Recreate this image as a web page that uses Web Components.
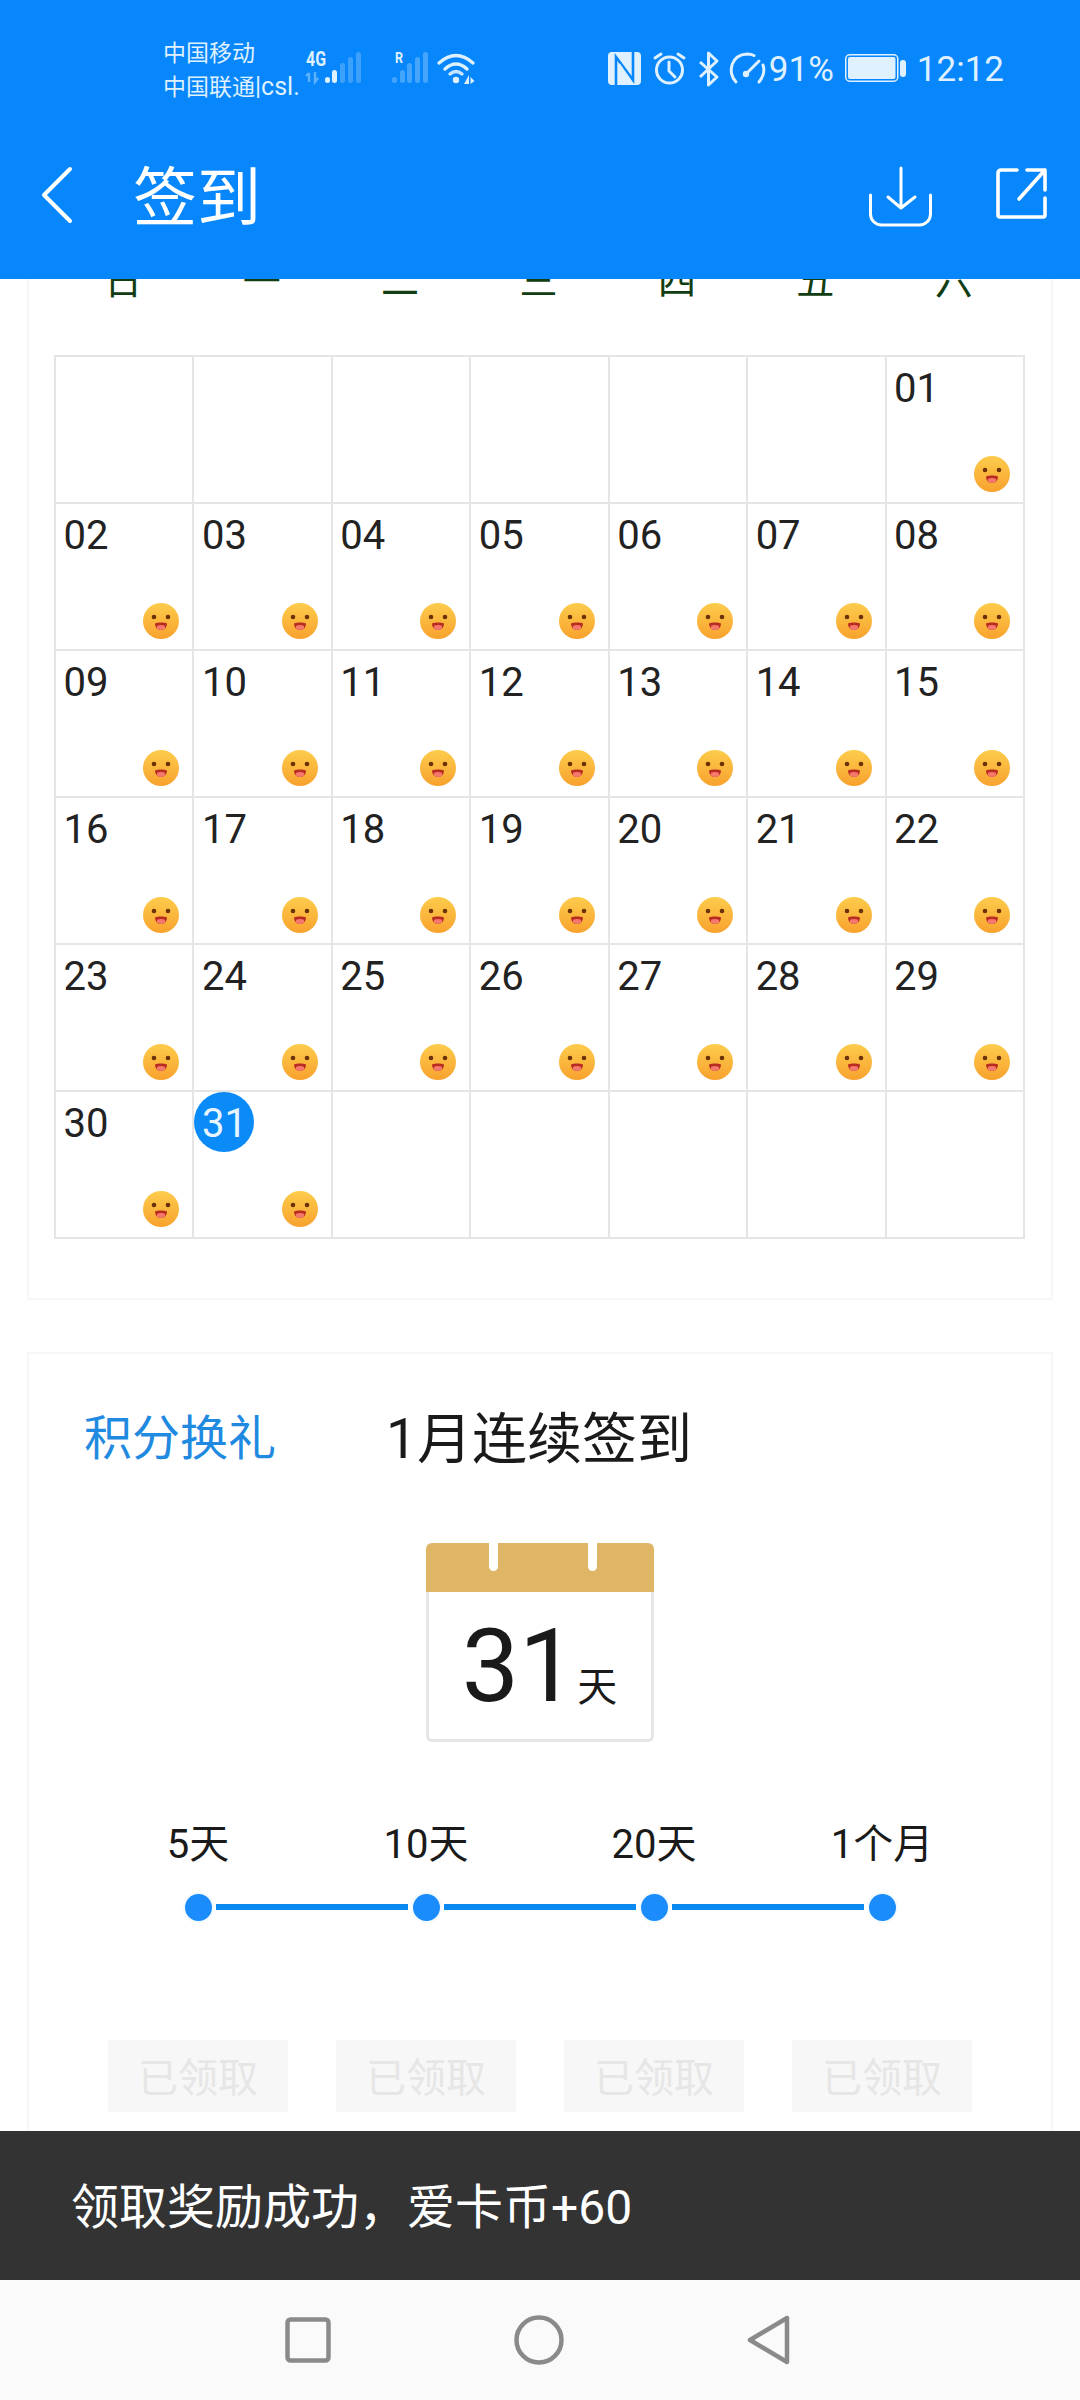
<!DOCTYPE html>
<html lang="zh">
<head>
<meta charset="utf-8">
<title>签到</title>
<style>
html, body { margin: 0; padding: 0; background: #fff; }
body { font-family: Roboto, "Noto Sans CJK SC", sans-serif; }
</style>
</head>
<body>
<app-shell>
  <status-bar slot="top"></status-bar>
  <title-bar slot="top">签到</title-bar>
  <calendar-card></calendar-card>
  <reward-card></reward-card>
  <toast-bar slot="bottom">领取奖励成功，爱卡币+60</toast-bar>
  <nav-bar slot="bottom"></nav-bar>
</app-shell>

<script>
class AppShell extends HTMLElement {
    constructor() {
        super();
        this.attachShadow({ mode: 'open' })
    }
    connectedCallback() {
        this.shadowRoot.innerHTML = `
        <style>
            :host { display: flex; flex-direction: column; width: 1080px; height: 2400px; overflow: hidden; background: #fff; }
            main { flex: 1; min-height: 0; overflow: hidden; display: flex; flex-direction: column; gap: 52px; }
        </style>
        <slot name="top"></slot>
        <main><slot></slot></main>
        <slot name="bottom"></slot>
        `
    }
}

class StatusBar extends HTMLElement {
    constructor() {
        super();
        this.attachShadow({ mode: 'open' })
    }
    connectedCallback() {
        const ink = '#dff0ff';
        this.shadowRoot.innerHTML = `
        <style>
            :host { display: flex; align-items: flex-start; height: 100px; box-sizing: border-box; padding: 0 76px 0 163px; background: #0787fb; color: ${ink}; }
            svg { display: block; flex: none; margin-top: 52px; overflow: visible; }
            .carrier { width: 143px; flex: none; margin-top: 37px; font-size: 23px; line-height: 33px; white-space: nowrap; }
            .carrier span { font-size: 25px; }
            .right { margin-left: auto; display: flex; align-items: flex-start; }
            .txt { font-size: 35px; line-height: 40px; margin-top: 50px; white-space: nowrap; }
        </style>
        <div class="carrier">中国移动<br>中国联通<span>|csl.</span></div>
        <svg width="56" height="33" viewBox="0 0 56 33">
            <text x="0" y="14" font-family="Roboto" font-weight="700" font-size="20" textLength="20" lengthAdjust="spacingAndGlyphs" fill="${ink}">4G</text>
            <g fill="#fff" fill-opacity=".22"><rect x="34" y="11" width="5" height="20" rx="2.5"/><rect x="42" y="5" width="5" height="26" rx="2.5"/><rect x="50" y="0" width="5" height="31" rx="2.5"/></g>
            <g fill="${ink}"><rect x="19" y="25" width="5" height="6" rx="2.5"/><rect x="26" y="18" width="5" height="13" rx="2.5"/></g>
            <path d="M3 21v9M0 24l3-3M9 20v10l3-4" stroke="#fff" stroke-opacity=".35" stroke-width="2.4" fill="none"/>
        </svg>
        <svg style="margin-left:30px" width="36" height="33" viewBox="0 0 36 33">
            <text x="3" y="11" font-family="Roboto" font-weight="700" font-size="15" textLength="8" lengthAdjust="spacingAndGlyphs" fill="${ink}">R</text>
            <g fill="#fff" fill-opacity=".25"><rect x="0" y="25" width="5" height="6" rx="2.5"/><rect x="8" y="18" width="5" height="13" rx="2.5"/><rect x="15" y="11" width="5" height="20" rx="2.5"/><rect x="23" y="5" width="5" height="26" rx="2.5"/><rect x="31" y="0" width="5" height="31" rx="2.5"/></g>
        </svg>
        <svg style="margin-left:9px" width="38" height="32" viewBox="0 0 38 32">
            <g fill="none" stroke="${ink}" stroke-width="3.4" stroke-linecap="round"><path d="M2 11Q19-4 36 11"/><path d="M8 17Q19 7 30 17"/><path d="M13 22Q19 17 25 22" opacity=".9"/></g>
            <circle cx="19" cy="28" r="3.2" fill="${ink}"/>
            <path d="M32 23v9h-5zM33.500 25l4 4-4 3z" fill="${ink}"/>
        </svg>
        <div class="right">
            <svg width="33" height="33" viewBox="0 0 33 33">
                <rect width="33" height="33" rx="4" fill="${ink}"/>
                <path d="M8 33V5l17 23V0" fill="none" stroke="#0787fb" stroke-width="2.600"/>
                <path d="M11 12l11 16" stroke="${ink}" stroke-width="2"/>
            </svg>
            <svg style="margin-left:12px" width="33" height="33" viewBox="0 0 33 33">
                <g fill="none" stroke="${ink}" stroke-width="3" stroke-linecap="round">
                    <circle cx="16.500" cy="18" r="13"/><path d="M16 10v9l6 6"/><path d="M2 6l6-4M31 6l-6-4"/>
                </g>
            </svg>
            <svg style="margin-left:12px" width="22" height="34" viewBox="0 0 22 34">
                <path d="M2 10l17 15-8.500 8V1L19 9 2 25" fill="none" stroke="${ink}" stroke-width="3" stroke-linejoin="round"/>
            </svg>
            <svg style="margin-left:9px" width="37" height="32" viewBox="0 0 37 32">
                <g fill="none" stroke="${ink}" stroke-width="3" stroke-linecap="round">
                    <path d="M7 30C-2 20 2 3 18 2c3 0 5 .5 7 1.500"/><path d="M34 13c2 6 1 11-4 17"/><path d="M17 22L30 9"/>
                </g>
                <circle cx="17" cy="22" r="3.200" fill="${ink}"/>
            </svg>
            <div class="txt" style="margin-left:3px;width:67px">91%</div>
            <svg style="margin-left:9px;margin-top:54px" width="61" height="28" viewBox="0 0 61 28">
                <rect x=".75" y=".75" width="52" height="26.500" rx="4" fill="none" stroke="${ink}" stroke-width="1.500"/>
                <rect x="3" y="3" width="47.500" height="22" rx="2" fill="${ink}"/>
                <rect x="55" y="6" width="6" height="17" rx="3" fill="${ink}"/>
            </svg>
            <div class="txt" style="margin-left:11px">12:12</div>
        </div>
        `
    }
}

class TitleBar extends HTMLElement {
    constructor() {
        super();
        this.attachShadow({ mode: 'open' })
    }
    connectedCallback() {
        this.shadowRoot.innerHTML = `
        <style>
            :host { display: flex; align-items: flex-start; height: 179px; box-sizing: border-box; padding: 67px 33px 0 41px; background: #0787fb; color: #fff; }
            svg { display: block; flex: none; overflow: visible; }
            .title { margin: 1px 0 0 60px; font-size: 64px; line-height: 62px; font-weight: 400; white-space: nowrap; }
            .actions { margin-left: auto; display: flex; align-items: flex-start; gap: 64px; }
        </style>
        <svg width="32" height="56" viewBox="0 0 32 56">
            <path d="M29 2L3 28l26 26" fill="none" stroke="#fff" stroke-width="4" stroke-linecap="round" stroke-linejoin="round"/>
        </svg>
        <div class="title"><slot></slot></div>
        <div class="actions">
            <svg width="63" height="60" viewBox="0 0 63 60">
                <g fill="none" stroke="#fff" stroke-width="3" stroke-linecap="round" stroke-linejoin="round">
                    <path d="M32 1v40M19 30l13 11 14-11"/>
                    <path d="M1.500 28v19a11 11 0 0 0 11 11h38a11 11 0 0 0 11-11V28"/>
                </g>
            </svg>
            <svg width="51" height="52" viewBox="0 0 51 52">
                <g fill="none" stroke="#fff" stroke-width="3.600" stroke-linecap="round" stroke-linejoin="round">
                    <path d="M21 3H5a3 3 0 0 0-3 3v42a2 2 0 0 0 2 2h43a2 2 0 0 0 2-2V31"/>
                    <path d="M23 32L49 3M31 3h18v20"/>
                </g>
            </svg>
        </div>
        `
    }
}

class DayCell extends HTMLElement {
    constructor() {
        super();
        this.attachShadow({ mode: 'open' })
    }
    connectedCallback() {
        const day = this.getAttribute('day');
        const today = this.hasAttribute('today');
        this.shadowRoot.innerHTML = `
        <style>
            :host { display: flex; flex-direction: column; justify-content: space-between; box-sizing: border-box; border-right: 2px solid #e5e5e5; border-bottom: 2px solid #e5e5e5; padding: 0 0 10px 0; min-width: 0; color: #222; }
            .num { width: 60px; height: 60px; box-sizing: border-box; padding-top: 3px; display: flex; align-items: center; justify-content: center; font-size: 40px; border-radius: 50%; }
            .num.today { padding-top: 2px; background: #0b8bf8; color: #e8f5ff; }
            svg { display: block; align-self: flex-end; margin-right: 13px; }
        </style>
        ${day ? `<div class="num ${today ? 'today' : ''}">${day}</div>
        <svg width="36" height="36" viewBox="0 0 36 36">
            <defs><linearGradient id="g" x1="0" y1="0" x2="0" y2="1"><stop offset="0" stop-color="#fdcc4c"/><stop offset="1" stop-color="#f8a22e"/></linearGradient></defs>
            <circle cx="18" cy="18" r="18" fill="url(#g)"/>
            <circle cx="11" cy="14" r="2.300" fill="#6b3208"/><circle cx="25" cy="14" r="2.300" fill="#6b3208"/>
            <path d="M12 20.500c3-1.300 9-1.300 12 0c0 3.800-2.500 6.500-6 6.500s-6-2.700-6-6.500z" fill="#b92c22"/>
            <ellipse cx="18" cy="24.500" rx="4.200" ry="2.400" fill="#f4796c"/>
        </svg>` : ''}
        `
    }
}

class CalendarCard extends HTMLElement {
    constructor() {
        super();
        this.attachShadow({ mode: 'open' })
    }
    connectedCallback() {
        const names = ['日', '一', '二', '三', '四', '五', '六'];
        let cells = '<day-cell></day-cell>'.repeat(6);
        for (let d = 1; d <= 31; d++) {
            const label = String(d).padStart(2, '0');
            cells += `<day-cell day="${label}" ${d === 31 ? 'today' : ''}></day-cell>`;
        }
        cells += '<day-cell></day-cell>'.repeat(5);
        this.shadowRoot.innerHTML = `
        <style>
            :host { display: block; flex: none; box-sizing: border-box; margin: -30px 27px 0; padding: 0 26px 59px 25px; border: 2px solid #f7f7f7; background: #fff; }
            .week { display: grid; grid-template-columns: repeat(7, 138.43px); height: 60px; margin: 0 0 44px 0; color: #123d12; font-size: 38px; line-height: 60px; text-align: center; }
            .grid { display: grid; grid-template-columns: repeat(7, 138.43px); grid-auto-rows: 147px; border-top: 2px solid #e5e5e5; border-left: 2px solid #e5e5e5; }
        </style>
        <div class="week">${names.map(n => `<span>${n}</span>`).join('')}</div>
        <div class="grid">${cells}</div>
        `
    }
}

class StreakCalendar extends HTMLElement {
    constructor() {
        super();
        this.attachShadow({ mode: 'open' })
    }
    connectedCallback() {
        this.shadowRoot.innerHTML = `
        <style>
            :host { display: block; width: 228px; height: 199px; box-sizing: border-box; }
            .top { position: relative; height: 49px; background: #dfb665; border-radius: 6px 6px 0 0; }
            .top i { position: absolute; top: 0; width: 9px; height: 28px; background: #fff; border-radius: 0 0 5px 5px; }
            .body { display: flex; align-items: baseline; justify-content: center; height: 150px; box-sizing: border-box; border: 3px solid #e6e6e6; border-top: 0; border-radius: 0 0 6px 6px; color: #1a1a1a; line-height: 148px; padding-right: 1px; }
            .n { font-size: 102px; }
            .u { font-size: 40px; margin-left: 1px; }
        </style>
        <div class="top"><i style="left:63px"></i><i style="left:162px"></i></div>
        <div class="body"><span class="n"><slot></slot></span><span class="u">天</span></div>
        `
    }
}

class ProgressStep extends HTMLElement {
    constructor() {
        super();
        this.attachShadow({ mode: 'open' })
    }
    connectedCallback() {
        const first = this.hasAttribute('first');
        const last = this.hasAttribute('last');
        this.shadowRoot.innerHTML = `
        <style>
            :host { display: flex; flex-direction: column; align-items: center; color: #1a1a1a; }
            .label { font-size: 40px; line-height: 50px; white-space: nowrap; }
            .track { display: flex; align-items: center; align-self: stretch; height: 28px; margin-top: 23px; }
            .seg { flex: 1; height: 6px; background: #0a8af0; }
            .seg.off { background: transparent; }
            .dot { width: 27px; height: 27px; margin: 0 4.500px; border-radius: 50%; background: #1a8cfb; box-shadow: 0 0 0 2px #f3faff; }
            .btn { width: 180px; height: 72px; margin-top: 119px; background: #f7f7f7; color: #e6e6e6; font-size: 40px; line-height: 78px; text-align: center; overflow: hidden; }
        </style>
        <div class="label"><slot></slot></div>
        <div class="track"><div class="seg ${first ? 'off' : ''}"></div><div class="dot"></div><div class="seg ${last ? 'off' : ''}"></div></div>
        <div class="btn">已领取</div>
        `
    }
}

class RewardCard extends HTMLElement {
    constructor() {
        super();
        this.attachShadow({ mode: 'open' })
    }
    connectedCallback() {
        this.shadowRoot.innerHTML = `
        <style>
            :host { display: block; flex: none; box-sizing: border-box; height: 860px; margin: 0 27px; padding: 49px 55px 0; border: 2px solid #f7f7f7; background: #fff; }
            .head { display: flex; align-items: center; height: 62px; white-space: nowrap; }
            .link { width: 302px; flex: none; color: #1f8adf; font-size: 48px; }
            .title { color: #1a1a1a; font-size: 55px; }
            .icon { display: flex; justify-content: center; margin-top: 78px; }
            .steps { display: grid; grid-template-columns: repeat(4, 228px); margin-top: 78px; }
        </style>
        <div class="head"><span class="link">积分换礼</span><span class="title">1月连续签到</span></div>
        <div class="icon"><streak-calendar>31</streak-calendar></div>
        <div class="steps">
            <progress-step first>5天</progress-step>
            <progress-step>10天</progress-step>
            <progress-step>20天</progress-step>
            <progress-step last>1个月</progress-step>
        </div>
        `
    }
}

class ToastBar extends HTMLElement {
    constructor() {
        super();
        this.attachShadow({ mode: 'open' })
    }
    connectedCallback() {
        this.shadowRoot.innerHTML = `
        <style>
            :host { display: flex; align-items: center; height: 149px; box-sizing: border-box; padding: 0 0 5px 71px; background: #333; color: #fff; font-size: 48px; white-space: nowrap; }
        </style>
        <slot></slot>
        `
    }
}

class NavBar extends HTMLElement {
    constructor() {
        super();
        this.attachShadow({ mode: 'open' })
    }
    connectedCallback() {
        this.shadowRoot.innerHTML = `
        <style>
            :host { display: flex; align-items: center; justify-content: center; gap: 183px; height: 120px; background: #fafafa; padding-right: 6px; }
            svg { display: block; flex: none; }
            g { fill: none; stroke: #8a8a8a; stroke-width: 4.500px; stroke-linejoin: round; }
        </style>
        <svg width="46" height="46" viewBox="0 0 46 46"><g><rect x="2.500" y="2.500" width="41" height="41" rx="3"/></g></svg>
        <svg width="50" height="50" viewBox="0 0 50 50"><g><circle cx="25" cy="25" r="22.500"/></g></svg>
        <svg width="43" height="50" viewBox="0 0 43 50"><g><path d="M40 3v44L3 25z"/></g></svg>
        `
    }
}

customElements.define('app-shell', AppShell);
customElements.define('status-bar', StatusBar);
customElements.define('title-bar', TitleBar);
customElements.define('day-cell', DayCell);
customElements.define('calendar-card', CalendarCard);
customElements.define('streak-calendar', StreakCalendar);
customElements.define('progress-step', ProgressStep);
customElements.define('reward-card', RewardCard);
customElements.define('toast-bar', ToastBar);
customElements.define('nav-bar', NavBar);
</script>
</body>
</html>
